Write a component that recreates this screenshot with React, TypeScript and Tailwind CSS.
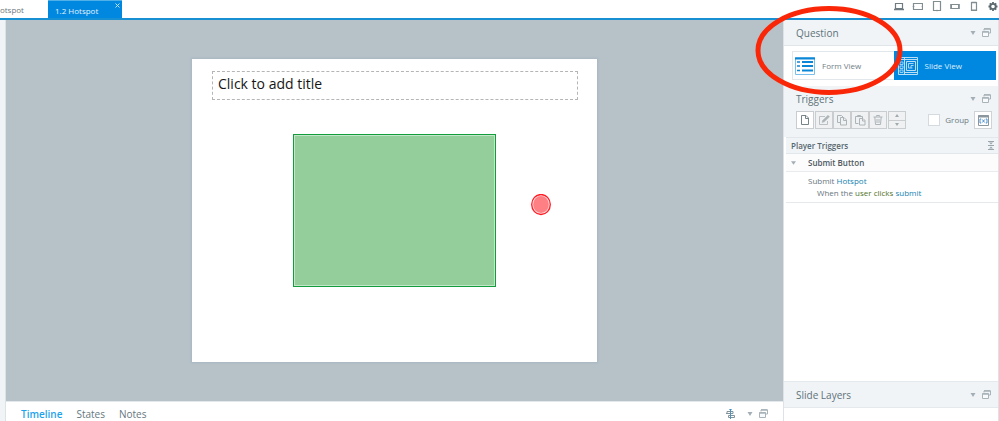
import { useState } from "react";
import type { ReactNode } from "react";

const toolClass =
  "flex h-[18px] w-[18px] items-center justify-center border border-[#c9cdd0] bg-[#f0f1f2] text-[#adb4b8]";

function DockControls({ name }: { name: string }) {
  return (
    <div className="flex items-center gap-1">
      <button type="button" aria-label={`${name} menu`} className="flex h-3 w-2 items-center">
        <svg width="6" height="4" viewBox="0 0 6 4" fill="#a3afb6">
          <path d="M.5 0h5L3 4z" />
        </svg>
      </button>
      <button type="button" aria-label={`Undock ${name}`} className="flex h-3 w-3 items-center">
        <svg width="9" height="9" viewBox="0 0 9 9" fill="none" stroke="#a9b4ba">
          <path d="M2 2.500V1h6.500v4H7" />
          <path d="M2 .8h6.500" strokeWidth="1.500" />
          <path d="M.5 3.500h6v5h-6z" fill="#f8fafb" />
          <path d="M.5 4h6" strokeWidth="1.500" />
        </svg>
      </button>
    </div>
  );
}

function PanelHeader({ title }: { title: string }) {
  return (
    <div className="flex h-[25px] items-center justify-between pr-1 pl-3">
      <h2 className="text-[10px] leading-4 text-[#5f7279]">{title}</h2>
      <DockControls name={title} />
    </div>
  );
}

function Device({ label, children }: { label: string; children: ReactNode }) {
  return (
    <button type="button" aria-label={label} className="flex h-3 w-3 items-center justify-center">
      <svg width="12" height="12" viewBox="0 0 12 12" fill="none" stroke="#828d92" strokeWidth="1.200">
        {children}
      </svg>
    </button>
  );
}

function DeviceBar() {
  return (
    <div className="flex h-3 items-center gap-[7px]">
      <Device label="Desktop">
        <path d="M3.500 3.500h7v5h-7z" stroke="#6f7b81" />
        <path d="M2 9.500h10" stroke="#6f7b81" strokeWidth="1.500" />
      </Device>
      <Device label="Tablet landscape">
        <path d="M2.500 3.500h9v6h-9z" />
        <path d="M2.500 6v1M11.500 6v1" strokeWidth="1.500" />
      </Device>
      <Device label="Tablet portrait">
        <path d="M3.500 1.500h7v9h-7z" />
        <path d="M6.500 10.500h1" strokeWidth="1.500" />
      </Device>
      <Device label="Phone landscape">
        <path d="M2 4.500h8v4H2z" />
        <path d="M2.200 4v5M9.800 4v5" strokeWidth="1.500" />
      </Device>
      <Device label="Phone portrait">
        <path d="M3.500 2.500h5v8h-5z" />
        <path d="M3.500 2.500h5M3.500 10.200h5" strokeWidth="1.500" />
      </Device>
      <Device label="Player settings">
        <circle cx="6" cy="6.500" r="2.700" stroke="#5a676d" strokeWidth="1.800" />
        <path
          d="M6 2v1.500M6 9.500V11M1.500 6.500H3M9 6.500h1.500M2.800 3.300l1 1M8.200 8.700l1 1M9.200 3.300l-1 1M3.800 8.700l-1 1"
          stroke="#5a676d"
          strokeWidth="1.800"
        />
      </Device>
    </div>
  );
}

function TopBar() {
  return (
    <header className="flex h-5 shrink-0 justify-between overflow-hidden border-b-2 border-[#1690d3] bg-white">
      <nav className="flex text-[8px] leading-5">
        <a href="#hotspot" className="flex w-12 text-[#6d777c]">
          <span className="-ml-1.5">Hotspot</span>
        </a>
        <a
          href="#hotspot-1-2"
          className="relative w-[74px] border-t border-[#4fb0ea] bg-[#0087e0] pl-[7px] text-[#e4f3fd]"
        >
          1.2 Hotspot
          <svg className="absolute top-[2px] right-[2px]" width="5" height="5" viewBox="0 0 5 5" stroke="#c3e3f8">
            <path d="M.5.5l4 4M4.500.5l-4 4" />
          </svg>
        </a>
      </nav>
      <DeviceBar />
    </header>
  );
}

function Slide() {
  return (
    <div className="relative h-[303px] w-[405px] bg-white shadow-[0_0_2px_1px_#a9b6c0]">
      <div className="absolute top-3 left-5 h-[29px] w-[366px] border border-dashed border-[#b5b5b5] px-[5px] pt-[2px]">
        <h1 className="text-[14px] leading-5 text-[#161616]">Click to add title</h1>
      </div>
      <div className="absolute top-[75px] left-[101px] h-[153px] w-[203px] border border-[#129c3c] bg-[#93ce9b] shadow-[inset_0_0_0_1px_#c2e8c9]" />
      <svg className="absolute top-[135px] left-[339px]" width="20" height="22" viewBox="0 0 20 22">
        <ellipse cx="10" cy="10.500" rx="9.300" ry="10" fill="#ffe0e1" stroke="#ff1c24" strokeWidth="1.300" />
        <ellipse cx="10" cy="10.500" rx="7.800" ry="8.500" fill="#ff8084" />
      </svg>
    </div>
  );
}

const bottomTabs = ["Timeline", "States", "Notes"];

function BottomTabs() {
  const [active, setActive] = useState("Timeline");

  return (
    <div className="flex h-5 shrink-0 items-center justify-between border-t border-[#e3e8ec] bg-white pt-1 pr-3 pl-[15px]">
      <div className="flex gap-[14px] text-[10px] leading-4">
        {bottomTabs.map((tab) => (
          <button
            key={tab}
            type="button"
            onClick={() => setActive(tab)}
            className={tab === active ? "font-semibold text-[#1ca2ea]" : "text-[#66777e]"}
          >
            {tab}
          </button>
        ))}
      </div>
      <div className="flex items-center gap-3">
        <button type="button" aria-label="Align timeline" className="h-[10px] w-[10px]">
          <svg width="10" height="10" viewBox="0 0 10 10" fill="none" stroke="#84929a">
            <path d="M2 2.500h6v2H2zM3.500 6.500h6v2h-6zM1 4.500h7" />
            <path d="M5.500 0v10" stroke="#4f93bf" />
            <path d="M4 0h3L5.500 2z" fill="#3a8fc7" stroke="none" />
          </svg>
        </button>
        <DockControls name="Timeline" />
      </div>
    </div>
  );
}

function FormIcon() {
  return (
    <svg width="20" height="18" viewBox="0 0 20 18" fill="none">
      <path d="M.5.5h19v17H.5z" fill="#fff" stroke="#79bfe9" />
      <path d="M0 1.500h20" stroke="#0b87d8" strokeWidth="2" />
      <path d="M2 5h3M2 9h3M2 13.500h3" stroke="#0b87d8" strokeWidth="1.300" />
      <path d="M7 5h11M7 9h11M7 13.500h11" stroke="#0b87d8" strokeWidth="1.800" />
    </svg>
  );
}

function SlideIcon() {
  return (
    <svg width="20" height="18" viewBox="0 0 20 18" fill="none" stroke="#b9def7">
      <path d="M.5.500h19v17H.5zM6.500.5v17M.5 2.500h19M6.500 15.500h13" />
      <path d="M2 5h3v2.500H2zM2 9h3v2.500H2zM2 13h3v2.500H2z" strokeWidth=".8" />
      <path d="M8.500 4.500h9v9h-9z" />
      <path d="M10.500 6.500h5M13 8.500h2.500M10.500 6.500v4.500h2.500V8.500M13 11h1.500" strokeWidth=".9" />
    </svg>
  );
}

function QuestionPanel() {
  return (
    <section>
      <div className="border-b border-[#dfe5e9] bg-[#f0f4f7]">
        <PanelHeader title="Question" />
      </div>
      <div className="flex bg-white pt-[5px] pr-[2px] pb-[6px] pl-2 text-[8px]">
        <button
          type="button"
          className="flex h-[29px] flex-1 items-center gap-[7px] border border-r-0 border-[#e2e7eb] bg-white pl-[2px] text-[#718087]"
        >
          <FormIcon />
          Form View
        </button>
        <button
          type="button"
          className="flex h-[29px] flex-1 items-center gap-[7px] bg-[#0087e0] pl-[4px] text-[#dcf0fd]"
        >
          <SlideIcon />
          Slide View
        </button>
      </div>
    </section>
  );
}

function TriggerToolbar() {
  return (
    <div className="flex items-center justify-between pr-[6px] pb-2 pl-3">
      <div className="flex">
        <button
          type="button"
          aria-label="New trigger"
          className="mr-px flex h-[18px] w-[18px] items-center justify-center border border-[#c9cdd0] bg-white"
        >
          <svg width="10" height="12" viewBox="0 0 10 12" fill="none" stroke="#77838a">
            <path d="M1.500 1.500h4.500l2.500 2.500v6.500h-7zM5.500 1.500V4.500h3" />
          </svg>
        </button>
        <button type="button" aria-label="Edit trigger" className={toolClass}>
          <svg width="12" height="12" viewBox="0 0 12 12" fill="none" stroke="currentColor">
            <path d="M7 2.500H1.500v8h8V7" strokeWidth=".8" />
            <path d="M4 8.500l.8-2.200 5.200-5 1.500 1.500-5.200 5z" fill="currentColor" strokeWidth=".5" />
          </svg>
        </button>
        <button type="button" aria-label="Copy trigger" className={toolClass}>
          <svg width="12" height="12" viewBox="0 0 12 12" fill="none" stroke="currentColor">
            <path d="M4 8.500H1.500v-7h4L7 3" />
            <path d="M4.500 3.500H8l2.500 2.500v5h-6zM7.500 3.500v3h3" />
          </svg>
        </button>
        <button type="button" aria-label="Paste trigger" className={toolClass}>
          <svg width="12" height="12" viewBox="0 0 12 12" fill="none" stroke="currentColor">
            <path d="M4.500 9.500h-3v-7h7v2M3.500 2.500v-1h3v1" />
            <path d="M5.500 4.500H9l2 2v4.500H5.500zM8.500 4.500v2.500H11" />
          </svg>
        </button>
        <button type="button" aria-label="Delete trigger" className={toolClass}>
          <svg width="10" height="12" viewBox="0 0 10 12" fill="none" stroke="currentColor">
            <path d="M.5 3h9M3.500 2.500v-1h3v1M1.800 3l.7 7.500h5L8.200 3M4 5v4M6 5v4" />
          </svg>
        </button>
        <div className="ml-px flex h-[18px] w-[18px] flex-col border border-[#c9cdd0] bg-[#f0f1f2]">
          <button
            type="button"
            aria-label="Move up"
            className="flex flex-1 items-center justify-center border-b border-[#c9cdd0]"
          >
            <svg width="4" height="3" viewBox="0 0 4 3" fill="#a2aaaf">
              <path d="M0 3h4L2 0z" />
            </svg>
          </button>
          <button type="button" aria-label="Move down" className="flex flex-1 items-center justify-center">
            <svg width="4" height="3" viewBox="0 0 4 3" fill="#a2aaaf">
              <path d="M0 0h4L2 3z" />
            </svg>
          </button>
        </div>
      </div>
      <div className="flex items-center gap-[5px]">
        <label className="flex items-center gap-[5px] text-[8px] text-[#6c7a81]">
          <input type="checkbox" className="h-3 w-3 appearance-none border border-[#d5dade] bg-white" />
          Group
        </label>
        <button
          type="button"
          aria-label="Variables"
          className="flex h-[18px] w-[18px] items-center justify-center border border-[#cdd3d7] bg-white"
        >
          <svg width="11" height="11" viewBox="0 0 11 11" fill="none" stroke="#8b979f">
            <path d="M.5.5h10v10H.5z" />
            <path d="M0 1.500h11" strokeWidth="2" />
            <path
              d="M3.200 4H2v4h1.200M7.800 4H9v4H7.800M4.300 4.500l2.400 3M6.700 4.500l-2.400 3"
              stroke="#4b8fd0"
            />
          </svg>
        </button>
      </div>
    </div>
  );
}

function TriggersPanel() {
  return (
    <section className="flex min-h-0 flex-1 flex-col bg-white">
      <div className="bg-[#f0f4f7]">
        <PanelHeader title="Triggers" />
        <TriggerToolbar />
      </div>
      <div className="ml-[2px] text-[8px] leading-3">
        <div className="flex h-[17px] items-center justify-between border-y border-[#e1e7eb] bg-[#f0f4f7] pr-1 pl-[5px]">
          <h3 className="font-semibold text-[#56666d]">Player Triggers</h3>
          <button type="button" aria-label="Collapse all">
            <svg width="6" height="9" viewBox="0 0 6 9" fill="#98a5ac">
              <path d="M0 0h6v1H0zM1 1.500h4L3 3.500zM0 4h6v1H0zM1 7.500h4L3 5.500zM0 8h6v1H0z" />
            </svg>
          </button>
        </div>
        <div className="flex h-[18px] items-center border-b border-[#e8ecef] bg-[#fcfcfc] pl-[5px]">
          <svg width="5" height="4" viewBox="0 0 6 4" fill="#a3afb6">
            <path d="M0 0h6L3 4z" />
          </svg>
          <h4 className="ml-3 font-semibold text-[#4c5960]">Submit Button</h4>
        </div>
        <div className="border-b border-[#e5e9ec] py-[3px] pl-[22px] text-[#68767d]">
          <p>
            Submit{" "}
            <a href="#layer" className="text-[#1482b0]">
              Hotspot
            </a>
          </p>
          <p className="pl-[9px]">
            When the{" "}
            <a href="#event" className="text-[#52731f]">
              user clicks
            </a>{" "}
            <a href="#object" className="text-[#1482b0]">
              submit
            </a>
          </p>
        </div>
      </div>
    </section>
  );
}

function Sidebar() {
  return (
    <aside className="relative flex w-[216px] shrink-0 flex-col border-x border-[#dce2e6] bg-white">
      <QuestionPanel />
      <TriggersPanel />
      <section className="h-10 shrink-0">
        <div className="border-y border-[#e3e9ed] bg-[#f0f4f7]">
          <PanelHeader title="Slide Layers" />
        </div>
      </section>
      <svg
        className="pointer-events-none absolute -top-4 -left-8"
        width="152"
        height="94"
        viewBox="0 0 152 94"
        fill="none"
      >
        <ellipse cx="77" cy="46.500" rx="71" ry="42" stroke="#f92707" strokeWidth="5" />
      </svg>
    </aside>
  );
}

export default function App() {
  return (
    <div className="flex h-screen flex-col bg-white font-['Open_Sans',sans-serif]">
      <TopBar />
      <div className="flex min-h-0 flex-1">
        <div className="w-[6px] shrink-0 border-r border-[#dde2e6] bg-[#f1f4f6]" />
        <div className="flex min-w-0 flex-1 flex-col">
          <main className="flex min-h-0 flex-1 items-center justify-center bg-[#b6c2c8]">
            <Slide />
          </main>
          <BottomTabs />
        </div>
        <Sidebar />
      </div>
    </div>
  );
}
